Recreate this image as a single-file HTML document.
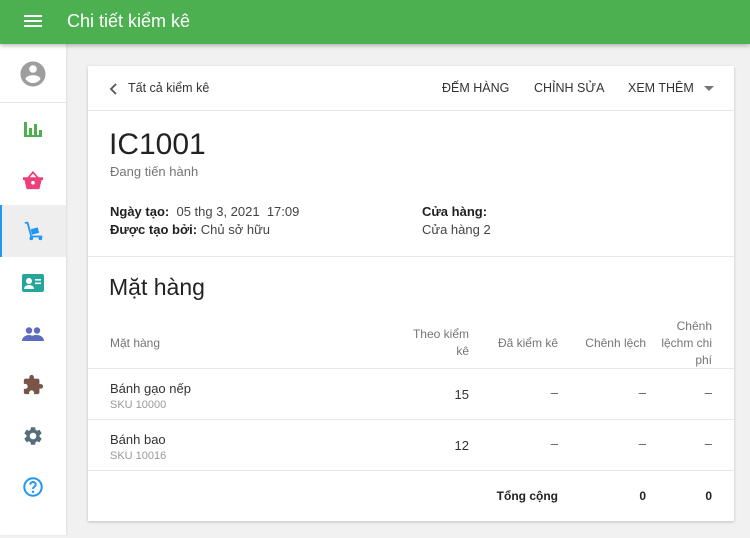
<!DOCTYPE html>
<html><head><meta charset="utf-8"><style>
*{margin:0;padding:0;box-sizing:border-box}
body{width:750px;height:538px;background:#f1f1f1;font-family:"Liberation Sans",Roboto,sans-serif;color:#212121;position:relative;overflow:hidden}
.hdr{position:absolute;left:0;top:0;width:750px;height:44px;background:#4caf50;box-shadow:0 2px 4px rgba(0,0,0,.25);z-index:2}
.hdr .t{position:absolute;left:67px;top:11px;color:#fff;font-size:18px}
.side{position:absolute;left:0;top:44px;width:66px;height:491px;background:#fff;box-shadow:1px 0 2px rgba(0,0,0,.08)}
.ic{position:absolute;left:0;width:66px;height:51px;display:flex;align-items:center;justify-content:center}
.card{position:absolute;left:88px;top:66px;width:646px;height:455px;background:#fff;box-shadow:0 1px 3px rgba(0,0,0,.2)}
.a{position:absolute;font-size:13px;white-space:nowrap}
.hl{position:absolute;left:0;width:646px;height:1px;background:#e8e8e8}
.g{color:#757575}
.r{text-align:right}
</style></head><body>
<div class="hdr">
<svg style="position:absolute;left:24px;top:14px" width="18" height="14"><rect y="1" width="18" height="2" fill="#fff"/><rect y="6" width="18" height="2" fill="#fff"/><rect y="11" width="18" height="2" fill="#fff"/></svg>
<div class="t">Chi tiết kiểm kê</div></div>
<div class="side">
<div class="ic" style="top:4px"><svg width="30" height="30" viewBox="0 0 24 24"><path fill="#9e9e9e" d="M12 2C6.48 2 2 6.48 2 12s4.48 10 10 10 10-4.48 10-10S17.52 2 12 2zm0 3c1.66 0 3 1.34 3 3s-1.34 3-3 3-3-1.34-3-3 1.34-3 3-3zm0 14.2c-2.5 0-4.710-1.28-6-3.22.03-1.99 4-3.08 6-3.08 1.99 0 5.970 1.09 6 3.08-1.29 1.94-3.5 3.22-6 3.22z"/></svg></div>
<div style="position:absolute;top:58px;left:0;width:66px;height:1px;background:#e6e6e6"></div>
<div class="ic" style="top:59px"><svg width="20" height="18"><rect x="1" y="2" width="3" height="14" fill="#4caf50"/><rect x="6" y="8" width="3" height="8" fill="#4caf50"/><rect x="11" y="4" width="3" height="12" fill="#4caf50"/><rect x="16" y="10" width="3" height="6" fill="#4caf50"/><rect x="1" y="15" width="18" height="2" fill="#4caf50"/></svg></div>
<div class="ic" style="top:110px"><svg width="22" height="20" viewBox="0 0 24 22"><path fill="#ec407a" d="M12 1L6 8H1v3h1.5l2.5 10h14l2.5-10H23V8h-5zM12 4l3.5 4h-7zM12 12a2 2 0 110 4 2 2 0 010-4z"/></svg></div>
<div class="ic" style="top:161px;background:#eeeeee;border-left:2px solid #2196f3;height:52px"><svg width="22" height="22" viewBox="0 0 24 24"><path fill="none" stroke="#2196f3" stroke-width="2" d="M2 3h3l4 15h12"/><rect x="9" y="9" width="8" height="6" fill="#2196f3" transform="rotate(-15 13 12)"/><circle cx="9" cy="20" r="2" fill="#2196f3"/><circle cx="19" cy="20" r="2" fill="#2196f3"/></svg></div>
<div class="ic" style="top:213px"><svg width="22" height="18"><rect width="22" height="18" rx="2" fill="#26a69a"/><circle cx="7" cy="7" r="3" fill="#fff"/><path d="M2 15c0-3 3-4 5-4s5 1 5 4z" fill="#fff"/><rect x="13" y="5" width="6" height="1.6" fill="#fff"/><rect x="13" y="8.5" width="6" height="1.6" fill="#fff"/></svg></div>
<div class="ic" style="top:264px"><svg width="22" height="14" viewBox="0 0 22 14"><circle cx="7" cy="3.5" r="3.2" fill="#5c6bc0"/><circle cx="15" cy="3.5" r="3.2" fill="#5c6bc0"/><path d="M0 14c0-4 4-6 7-6s7 2 7 6zM12 14c0-2-1-4-2-5 1-.7 3-1 5-1 3 0 7 2 7 6z" fill="#5c6bc0"/></svg></div>
<div class="ic" style="top:315px"><svg width="22" height="22" viewBox="0 0 24 24"><path fill="#795548" d="M20.5 11H19V7c0-1.1-.9-2-2-2h-4V3.5a2.5 2.5 0 00-5 0V5H4c-1.1 0-2 .9-2 2v3.8h1.5c1.5 0 2.7 1.2 2.7 2.7S5 16.2 3.5 16.2H2V20c0 1.1.9 2 2 2h3.8v-1.5c0-1.5 1.2-2.7 2.7-2.7s2.7 1.2 2.7 2.7V22H17c1.1 0 2-.9 2-2v-4h1.5a2.5 2.5 0 000-5z"/></svg></div>
<div class="ic" style="top:366px"><svg width="22" height="22" viewBox="0 0 24 24"><path fill="#546e7a" d="M19.14 12.94c.04-.3.06-.61.06-.94 0-.32-.02-.64-.07-.94l2.030-1.58a.49.49 0 00.12-.61l-1.92-3.32a.49.49 0 00-.59-.22l-2.39.96c-.5-.38-1.03-.7-1.62-.94l-.36-2.54a.48.48 0 00-.48-.41h-3.840c-.24 0-.43.17-.47.41l-.36 2.54c-.59.24-1.13.57-1.62.94l-2.39-.96a.48.48 0 00-.59.22L2.74 8.87c-.12.21-.08.47.12.61l2.030 1.58c-.05.3-.09.63-.09.94s.02.64.07.94l-2.030 1.58a.49.49 0 00-.12.61l1.92 3.32c.12.22.37.29.59.22l2.39-.96c.5.38 1.03.7 1.62.94l.36 2.54c.05.24.24.41.48.41h3.840c.24 0 .44-.17.47-.41l.36-2.54c.59-.24 1.13-.56 1.62-.94l2.39.96c.22.08.47 0 .59-.22l1.92-3.32c.12-.22.07-.47-.12-.61zM12 15.6A3.6 3.6 0 1112 8.4a3.6 3.6 0 010 7.2z"/></svg></div>
<div class="ic" style="top:417px"><svg width="22" height="22" viewBox="0 0 24 24"><circle cx="12" cy="12" r="9.5" fill="none" stroke="#2196f3" stroke-width="2.2"/><path d="M9 9.5a3 3 0 116 0c0 2-3 2.2-3 4.5" fill="none" stroke="#2196f3" stroke-width="2.2"/><circle cx="12" cy="17.3" r="1.3" fill="#2196f3"/></svg></div>
</div>
<div class="card">
<svg style="position:absolute;left:21px;top:16px" width="10" height="14"><path d="M7 2L2 7l5 5" fill="none" stroke="#555" stroke-width="1.8"/></svg>
<div class="a" style="left:40px;top:15px;color:#333;font-size:12.5px">Tất cả kiểm kê</div>
<div class="a" style="left:354px;top:15px;color:#333;font-size:12.5px">ĐẾM HÀNG</div>
<div class="a" style="left:446px;top:15px;color:#333;font-size:12.5px">CHỈNH SỬA</div>
<div class="a" style="left:540px;top:15px;color:#333;font-size:12.5px">XEM THÊM</div>
<svg style="position:absolute;left:616px;top:20px" width="10" height="6"><path d="M0 0h10L5 5z" fill="#777"/></svg>
<div class="hl" style="top:44px"></div>
<div class="a" style="left:21px;top:62px;font-size:30px;color:#222">IC1001</div>
<div class="a g" style="left:22px;top:98px">Đang tiến hành</div>
<div class="a" style="left:22px;top:138px"><b style="font-weight:600">Ngày tạo:</b>&nbsp; <span style="color:#444">05 thg 3, 2021&nbsp;&nbsp;17:09</span></div>
<div class="a" style="left:22px;top:156px"><b style="font-weight:600">Được tạo bởi:</b> <span style="color:#444">Chủ sở hữu</span></div>
<div class="a" style="left:334px;top:138px;font-weight:600">Cửa hàng:</div>
<div class="a" style="left:334px;top:156px;color:#444">Cửa hàng 2</div>
<div class="hl" style="top:190px"></div>
<div class="a" style="left:21px;top:208px;font-size:23px;color:#222">Mặt hàng</div>
<div class="a g" style="left:22px;top:270px;font-size:12px">Mặt hàng</div>
<div class="a g r" style="left:310px;top:260px;width:71px;font-size:12px;line-height:17px;white-space:normal">Theo kiểm kê</div>
<div class="a g r" style="left:390px;top:270px;width:80px;font-size:12px">Đã kiểm kê</div>
<div class="a g r" style="left:478px;top:270px;width:80px;font-size:12px">Chênh lệch</div>
<div class="a g r" style="left:564px;top:252px;width:60px;font-size:12px;line-height:17px;white-space:normal">Chênh lệchm chi phí</div>
<div class="hl" style="top:302px"></div>
<div class="a" style="left:22px;top:315px;color:#333">Bánh gạo nếp</div>
<div class="a" style="left:22px;top:333px;font-size:11px;color:#999">SKU 10000</div>
<div class="a r" style="left:301px;top:321px;width:80px;color:#333">15</div>
<div class="a r" style="left:390px;top:319px;width:80px;color:#555">–</div>
<div class="a r" style="left:478px;top:319px;width:80px;color:#555">–</div>
<div class="a r" style="left:544px;top:319px;width:80px;color:#555">–</div>
<div class="hl" style="top:353px"></div>
<div class="a" style="left:22px;top:366px;color:#333">Bánh bao</div>
<div class="a" style="left:22px;top:384px;font-size:11px;color:#999">SKU 10016</div>
<div class="a r" style="left:301px;top:372px;width:80px;color:#333">12</div>
<div class="a r" style="left:390px;top:370px;width:80px;color:#555">–</div>
<div class="a r" style="left:478px;top:370px;width:80px;color:#555">–</div>
<div class="a r" style="left:544px;top:370px;width:80px;color:#555">–</div>
<div class="hl" style="top:404px"></div>
<div class="a r" style="left:370px;top:423px;width:100px;font-size:12px;font-weight:700">Tổng cộng</div>
<div class="a r" style="left:478px;top:423px;width:80px;font-size:12px;font-weight:700">0</div>
<div class="a r" style="left:544px;top:423px;width:80px;font-size:12px;font-weight:700">0</div>
</div>
</body></html>
